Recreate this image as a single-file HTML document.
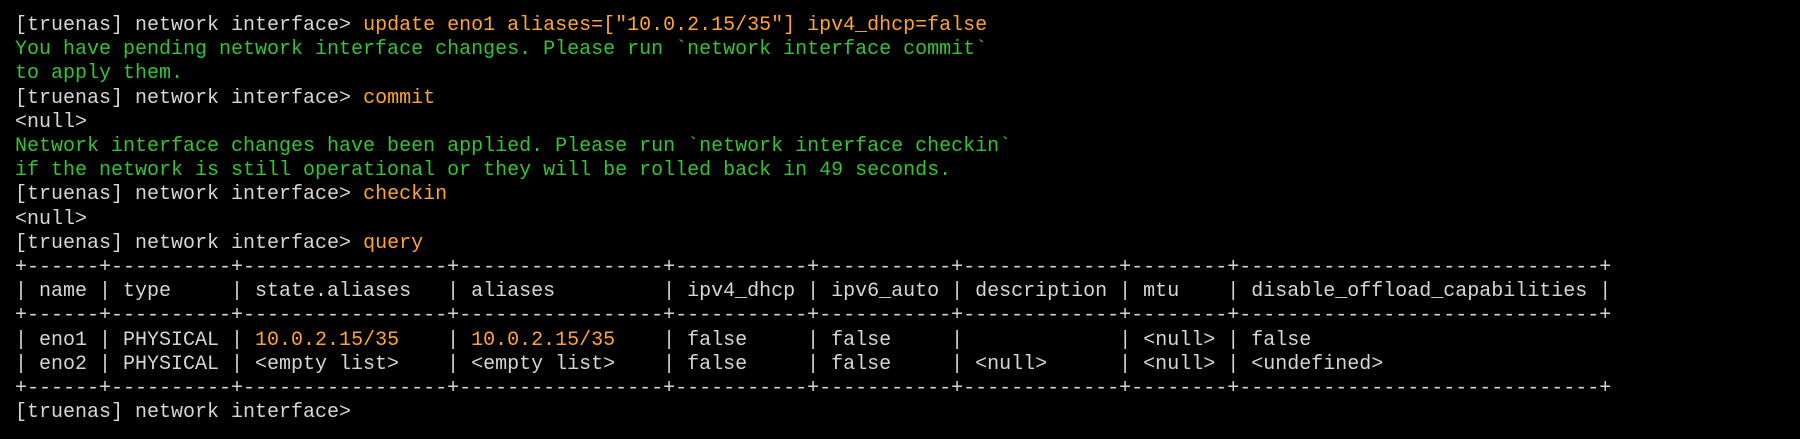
<!DOCTYPE html>
<html><head><meta charset="utf-8"><style>
html,body{margin:0;padding:0;background:#000;width:1800px;height:439px;overflow:hidden}
pre{margin:0;position:absolute;left:15px;top:14px;font-family:"Liberation Mono",monospace;font-size:20px;line-height:24.2px;color:#d6d6d6;white-space:pre}
.o{color:#ffa52e}.g{color:#33c433}
</style></head><body><pre>[truenas] network interface&gt; <span class="o">update eno1 aliases=["10.0.2.15/35"] ipv4_dhcp=false</span>
<span class="g">You have pending network interface changes. Please run `network interface commit`</span>
<span class="g">to apply them.</span>
[truenas] network interface&gt; <span class="o">commit</span>
&lt;null&gt;
<span class="g">Network interface changes have been applied. Please run `network interface checkin`</span>
<span class="g">if the network is still operational or they will be rolled back in 49 seconds.</span>
[truenas] network interface&gt; <span class="o">checkin</span>
&lt;null&gt;
[truenas] network interface&gt; <span class="o">query</span>
+------+----------+-----------------+-----------------+-----------+-----------+-------------+--------+------------------------------+
| name | type     | state.aliases   | aliases         | ipv4_dhcp | ipv6_auto | description | mtu    | disable_offload_capabilities |
+------+----------+-----------------+-----------------+-----------+-----------+-------------+--------+------------------------------+
| eno1 | PHYSICAL | <span class="o">10.0.2.15/35</span>    | <span class="o">10.0.2.15/35</span>    | false     | false     |             | &lt;null&gt; | false
| eno2 | PHYSICAL | &lt;empty list&gt;    | &lt;empty list&gt;    | false     | false     | &lt;null&gt;      | &lt;null&gt; | &lt;undefined&gt;
+------+----------+-----------------+-----------------+-----------+-----------+-------------+--------+------------------------------+
[truenas] network interface&gt;</pre></body></html>
